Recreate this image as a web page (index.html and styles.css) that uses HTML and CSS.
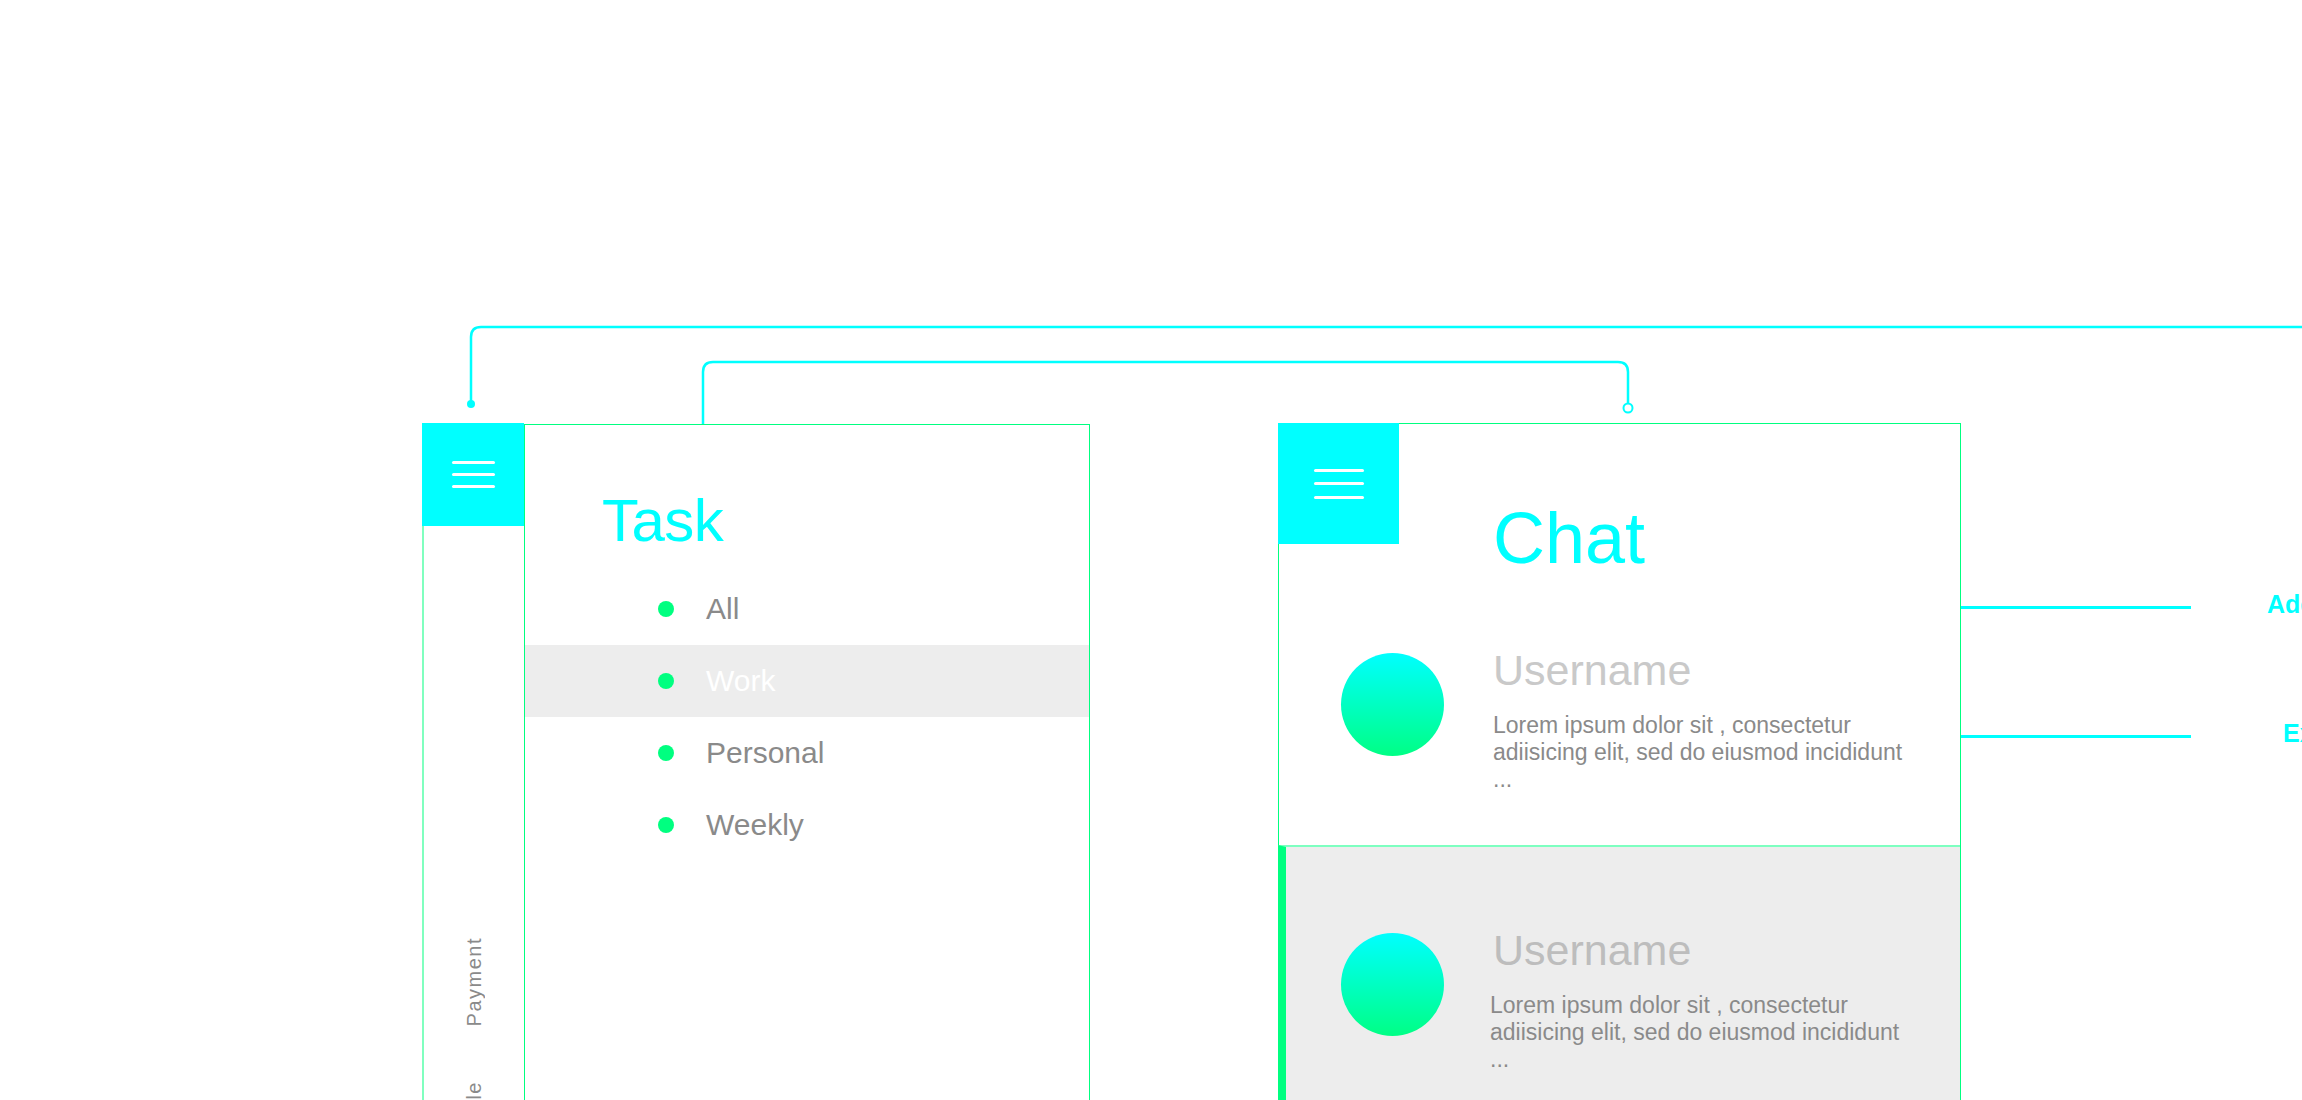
FILE: index.html
```html
<!DOCTYPE html>
<html lang="en">
<head>
    <meta charset="UTF-8">
    <meta name="viewport" content="width=device-width, initial-scale=1.0">
    <title>Task / Chat flow</title>
    <link rel="stylesheet" href="styles.css">
</head>
<body>
    <div class="board">
        <!-- flow connectors between the screens -->
        <svg class="links" width="2302" height="1100" viewBox="0 0 2302 1100">
            <path d="M471 402 V337 Q471 327 481 327 H2330" />
            <circle class="dot" cx="471" cy="404" r="4" />
            <path d="M703 424 V372 Q703 362 713 362 H1618 Q1628 362 1628 372 V403" />
            <circle class="ring" cx="1628" cy="408" r="4.5" />
        </svg>

        <div class="task-app">
            <aside class="sidebar">
                <div class="menu-btn">
                    <span></span><span></span><span></span>
                </div>
                <nav class="side-nav">
                    <span>Payment</span>
                    <span>Schedule</span>
                </nav>
            </aside>
            <section class="panel task-panel">
                <h1 class="task-title">Task</h1>
                <ul class="task-list">
                    <li><i></i>All</li>
                    <li class="active"><i></i>Work</li>
                    <li><i></i>Personal</li>
                    <li><i></i>Weekly</li>
                </ul>
            </section>
        </div>

        <section class="panel chat-panel">
            <header class="chat-head">
                <div class="menu-btn big">
                    <span></span><span></span><span></span>
                </div>
                <h1 class="chat-title">Chat</h1>
            </header>
            <div class="chat-item">
                <div class="avatar"></div>
                <div class="chat-body">
                    <h2>Username</h2>
                    <p>Lorem ipsum dolor sit , consectetur adiisicing elit, sed do eiusmod incididunt ...</p>
                </div>
            </div>
            <div class="chat-item active">
                <div class="avatar"></div>
                <div class="chat-body">
                    <h2>Username</h2>
                    <p>Lorem ipsum dolor sit , consectetur adiisicing elit, sed do eiusmod incididunt ...</p>
                </div>
            </div>
        </section>

        <div class="actions">
            <div class="action"><b></b><span>Add</span></div>
            <div class="action exit"><b></b><span>Exit</span></div>
        </div>
    </div>
</body>
</html>
```

FILE: styles.css
```css
body {
    margin: 0;
    background: #fff;
    font-family: 'Liberation Sans', Arial, sans-serif;
    color: #8a8a8a;
    overflow: hidden;
}
.board {
    position: relative;
    display: flex;
    align-items: flex-start;
    width: 2302px;
    height: 1100px;
    padding: 423px 0 0 422px;
    box-sizing: border-box;
    overflow: hidden;
}
.links {
    position: absolute;
    top: 0;
    left: 0;
    pointer-events: none;
}
.links path {
    fill: none;
    stroke: #00ffff;
    stroke-width: 2.5;
}
.links .dot {
    fill: #00ffff;
}
.links .ring {
    fill: #fff;
    stroke: #00ffff;
    stroke-width: 2;
}

/* hamburger block */
.menu-btn {
    display: flex;
    flex-direction: column;
    align-items: center;
    justify-content: center;
    gap: 9px;
    width: 102px;
    height: 103px;
    background: #00ffff;
    flex-shrink: 0;
}
.menu-btn span {
    display: block;
    width: 43px;
    height: 3px;
    border-radius: 2px;
    background: #fff;
}
.menu-btn.big {
    width: 121px;
    height: 121px;
    gap: 10.5px;
    margin: -1px 0 0 -1px;
}
.menu-btn.big span {
    width: 50px;
}

/* task screen */
.task-app {
    display: flex;
    flex-shrink: 0;
}
.sidebar {
    width: 102px;
}
.side-nav {
    display: flex;
    flex-direction: column;
    align-items: center;
    gap: 55px;
    height: 700px;
    padding-top: 411px;
    border-left: 2px solid #80ffbf;
    box-sizing: border-box;
}
.side-nav span {
    writing-mode: vertical-rl;
    transform: rotate(180deg);
    font-size: 20px;
    letter-spacing: 1.5px;
    color: #8a8a8a;
}
.panel {
    border: 1px solid #00ff80;
    background: #fff;
    flex-shrink: 0;
}
.task-panel {
    width: 566px;
    height: 800px;
    margin-top: 1px;
    box-sizing: border-box;
}
.task-title {
    margin: 66px 0 0 77px;
    font-size: 60px;
    line-height: 60px;
    font-weight: normal;
    letter-spacing: -0.5px;
    color: #00ffff;
}
.task-list {
    list-style: none;
    margin: 22px 0 0;
    padding: 0;
}
.task-list li {
    display: flex;
    align-items: center;
    height: 72px;
    padding-left: 133px;
    font-size: 30px;
    line-height: 30px;
    color: #8a8a8a;
}
.task-list li i {
    width: 16px;
    height: 16px;
    margin-right: 32px;
    border-radius: 50%;
    background: #00ff80;
}
.task-list li.active {
    background: #ededed;
    color: #fff;
}

/* chat screen */
.chat-panel {
    width: 683px;
    height: 800px;
    margin-left: 188px;
    box-sizing: border-box;
}
.chat-head {
    display: flex;
    align-items: flex-start;
}
.chat-title {
    margin: 85px 0 0 94px;
    font-size: 72px;
    line-height: 58px;
    font-weight: normal;
    color: #00ffff;
}
.chat-item {
    display: flex;
    align-items: flex-start;
    height: 278px;
    padding: 82px 20px 0 62px;
    box-sizing: border-box;
}
.chat-item.active {
    margin-left: -1px;
    padding-left: 55px;
    border-left: 8px solid #00ff80;
    border-top: 2px solid #7dffc0;
    background: #ededed;
}
.avatar {
    width: 103px;
    height: 103px;
    margin: 4px 49px 0 0;
    border-radius: 50%;
    background: linear-gradient(180deg, #00ffff, #00ff85);
    flex-shrink: 0;
}
.chat-body h2 {
    margin: 0;
    font-size: 43px;
    line-height: 43px;
    font-weight: normal;
    color: #c9c9c9;
}
.chat-item.active h2 {
    color: #bdbdbd;
}
.chat-body p {
    max-width: 425px;
    margin: 20px 0 0;
    font-size: 23px;
    line-height: 27px;
    color: #8a8a8a;
}
.chat-item.active p {
    margin-left: -3px;
}

/* actions on the right */
.actions {
    display: flex;
    flex-direction: column;
    gap: 89px;
    margin-top: 164px;
    flex-shrink: 0;
}
.action {
    display: flex;
    align-items: center;
    height: 40px;
}
.action b {
    display: block;
    width: 230px;
    height: 3px;
    background: #00ffff;
}
.action span {
    margin: 0 0 6px 76px;
    font-size: 25px;
    font-weight: bold;
    color: #00ffff;
    white-space: nowrap;
}
.action.exit span {
    margin-left: 92px;
}
```
